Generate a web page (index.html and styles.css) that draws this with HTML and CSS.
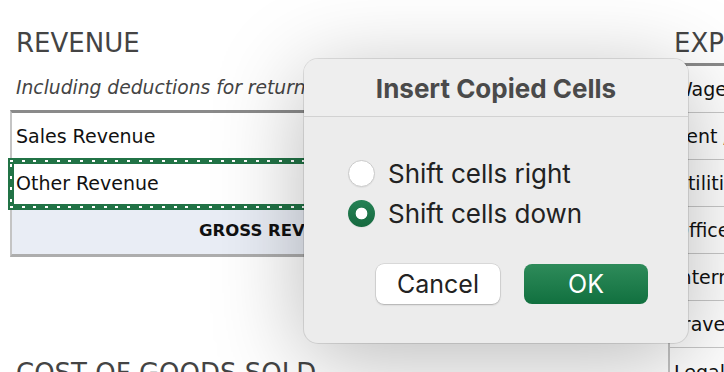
FILE: index.html
```html
<!DOCTYPE html>
<html lang="en">

<head>
    <meta charset="UTF-8">
    <meta name="viewport" content="width=device-width, initial-scale=1.0">
    <title>Insert Copied Cells</title>
    <link rel="stylesheet" href="styles.css">
</head>

<body>
    <div class="sheet">
        <section class="block revenue">
            <h2 class="heading">REVENUE</h2>
            <p class="note">Including deductions for returns and allowances.</p>
            <div class="table">
                <div class="row">Sales Revenue</div>
                <div class="row selected">Other Revenue</div>
                <div class="row total"><span>GROSS REVENUE</span></div>
            </div>
            <h2 class="heading cogs">COST OF GOODS SOLD</h2>
        </section>

        <section class="block expenses">
            <h2 class="heading">EXPENSES</h2>
            <div class="table">
                <div class="row">Wages</div>
                <div class="row">Rent / Lease</div>
                <div class="row">Utilities</div>
                <div class="row">Office Supplies</div>
                <div class="row">Internet</div>
                <div class="row">Travel</div>
                <div class="row">Legal</div>
            </div>
        </section>
    </div>

    <div class="dialog">
        <div class="dialog-title">Insert Copied Cells</div>
        <div class="options">
            <label class="option">
                <span class="radio"></span>
                Shift cells right
            </label>
            <label class="option">
                <span class="radio checked"></span>
                Shift cells down
            </label>
        </div>
        <div class="buttons">
            <button class="btn cancel">Cancel</button>
            <button class="btn ok">OK</button>
        </div>
    </div>
</body>

</html>
```

FILE: styles.css
```css
* {
    box-sizing: border-box;
    margin: 0;
    padding: 0;
}

body {
    width: 724px;
    height: 372px;
    overflow: hidden;
    background-color: #fff;
    font-family: "DejaVu Sans", sans-serif;
    color: #111;
}

.sheet {
    display: flex;
    gap: 18px;
    padding: 27px 0 0 10px;
}

.revenue {
    width: 640px;
    flex-shrink: 0;
}

.expenses {
    width: 300px;
    flex-shrink: 0;
}

.heading {
    font-size: 26px;
    font-weight: normal;
    line-height: 32px;
    color: #444;
    padding-left: 6px;
    white-space: nowrap;
}

.note {
    margin-top: 18px;
    font-size: 18.7px;
    font-style: italic;
    line-height: 21px;
    color: #444;
    padding-left: 6px;
    white-space: nowrap;
}

.revenue .table {
    margin-top: 12px;
}

.expenses .table {
    margin-top: 4px;
}

.table {
    border-top: 3px solid #8a8a8a;
    border-left: 2px solid #c4c4c4;
    border-bottom: 3px solid #adadad;
}

.row {
    height: 47px;
    display: flex;
    align-items: center;
    padding-left: 4px;
    font-size: 19px;
    border-bottom: 1px solid #c9c9c9;
    white-space: nowrap;
}

.row:last-child {
    border-bottom: none;
}

.selected {
    position: relative;
}

/* marching-ants copy border */
.selected::after {
    content: "";
    position: absolute;
    top: -2px;
    bottom: -4px;
    left: -4px;
    right: 0;
    border: 6px solid #217346;
}

.selected::before {
    content: "";
    position: absolute;
    top: 0;
    bottom: -2px;
    left: -2px;
    right: 0;
    z-index: 1;
    background:
        repeating-linear-gradient(90deg, #fff 0 3px, transparent 3px 11.7px) top left / 100% 2px no-repeat,
        repeating-linear-gradient(90deg, #fff 0 3px, transparent 3px 11.7px) bottom left / 100% 2px no-repeat,
        repeating-linear-gradient(180deg, transparent 0 4px, #fff 4px 7px, transparent 7px 11.7px) top left / 2px 100% no-repeat;
}

.total {
    background-color: #e9edf5;
    padding-left: 187px;
    font-size: 16.5px;
    font-weight: bold;
}

.cogs {
    margin-top: 100px;
}

.dialog {
    position: absolute;
    z-index: 10;
    left: 304px;
    top: 59px;
    width: 384px;
    height: 284px;
    background-color: #ececec;
    border-radius: 14px;
    box-shadow: 0 0 0 1px rgba(0, 0, 0, 0.1), 0 16px 90px rgba(0, 0, 0, 0.28);
    font-family: Inter, "Liberation Sans", sans-serif;
    color: #222;
}

.dialog-title {
    height: 58px;
    border-bottom: 1px solid #d2d2d2;
    text-align: center;
    font-size: 26px;
    font-weight: bold;
    line-height: 60px;
    color: #4a4a4a;
    background-color: #eeeeee;
    border-radius: 14px 14px 0 0;
}

.options {
    margin-top: 36px;
    display: flex;
    flex-direction: column;
}

.option {
    height: 40px;
    display: flex;
    align-items: center;
    gap: 13px;
    padding-left: 44px;
    font-size: 26px;
}

.radio {
    flex-shrink: 0;
    width: 27px;
    height: 27px;
    border-radius: 50%;
    background-color: #fff;
    border: 1px solid #cacaca;
    box-shadow: 0 1px 1px rgba(0, 0, 0, 0.05);
}

.radio.checked {
    border: none;
    background:
        radial-gradient(circle, #fff 0 5.5px, transparent 6.2px),
        linear-gradient(#258255, #16693f);
}

.buttons {
    margin-top: 31px;
    display: flex;
    justify-content: flex-end;
    gap: 24px;
    padding-right: 40px;
}

.btn {
    width: 124px;
    height: 40px;
    border: none;
    border-radius: 8px;
    font-family: inherit;
    font-size: 25px;
}

.cancel {
    background-color: #fff;
    color: #222;
    box-shadow: 0 0 0 0.5px rgba(0, 0, 0, 0.15), 0 1px 2px rgba(0, 0, 0, 0.2);
}

.ok {
    background: linear-gradient(#2e8b5a, #11703f);
    color: #fff;
}
```
